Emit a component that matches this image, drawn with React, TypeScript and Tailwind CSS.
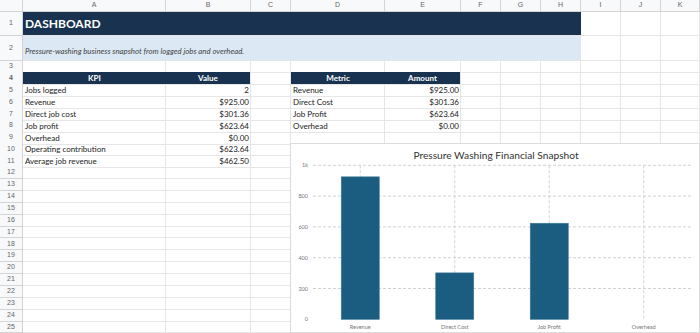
const GRID =
  "grid grid-cols-[23px_143px_85px_40px_94px_76px_40px_40px_40px_40px_40px_1fr]";

const letters = ["A", "B", "C", "D", "E", "F", "G", "H", "I", "J", "K"];

type DataRow = { n: number; kpi?: string; value?: string; metric?: string; amount?: string };

const dataRows: DataRow[] = [
  { n: 5, kpi: "Jobs logged", value: "2", metric: "Revenue", amount: "$925.00" },
  { n: 6, kpi: "Revenue", value: "$925.00", metric: "Direct Cost", amount: "$301.36" },
  { n: 7, kpi: "Direct job cost", value: "$301.36", metric: "Job Profit", amount: "$623.64" },
  { n: 8, kpi: "Job profit", value: "$623.64", metric: "Overhead", amount: "$0.00" },
  { n: 9, kpi: "Overhead", value: "$0.00" },
  { n: 10, kpi: "Operating contribution", value: "$623.64" },
  { n: 11, kpi: "Average job revenue", value: "$462.50" },
  ...Array.from({ length: 14 }, (_, i) => ({ n: 12 + i })),
];

const chartData = [
  { label: "Revenue", value: 925 },
  { label: "Direct Cost", value: 301.36 },
  { label: "Job Profit", value: 623.64 },
  { label: "Overhead", value: 0 },
];

const RowHead = ({ n }: { n: number }) => (
  <div className="flex items-center justify-center border-r border-b border-[#d4d4d4] bg-[#f8f9fa] font-['Liberation_Sans',sans-serif] text-[7px] text-[#666]">
    {n}
  </div>
);

const Empty = () => <div className="border-r border-b border-[#e6e6e6]" />;

const Chart = () => {
  // chart-local coordinates (chart box starts at x=290, y=143)
  const top = 21.3;
  const bottom = 175.3;
  const left = 22;
  const right = 400;
  const step = (right - left) / chartData.length;
  const y = (v: number) => bottom - (v / 1000) * (bottom - top);

  return (
    <div className="absolute left-[290px] top-[143px] h-[190px] w-[410px] border border-[#dcdcdc] bg-white">
      <svg width="410" height="190" className="font-['Lato',sans-serif]">
        <text x="205" y="15" textAnchor="middle" fontSize="10.2" fill="#333">
          Pressure Washing Financial Snapshot
        </text>
        {[1000, 800, 600, 400, 200].map((v) => (
          <line
            key={v}
            x1={left}
            x2={right}
            y1={y(v)}
            y2={y(v)}
            stroke="#d2d2d2"
            strokeWidth="1"
            strokeDasharray="3 2"
          />
        ))}
        {chartData.map((d, i) => (
          <line
            key={d.label}
            x1={left + step * (i + 0.5)}
            x2={left + step * (i + 0.5)}
            y1={top}
            y2={bottom}
            stroke="#d2d2d2"
            strokeWidth="1"
            strokeDasharray="3 2"
          />
        ))}
        {[0, 200, 400, 600, 800, 1000].map((v) => (
          <text key={v} x="17" y={y(v) + 2} textAnchor="end" fontSize="5.5" fill="#777">
            {v === 1000 ? "1k" : v}
          </text>
        ))}
        {chartData.map((d, i) =>
          d.value > 0 ? (
            <rect
              key={d.label}
              x={left + step * (i + 0.5) - 19}
              y={y(d.value)}
              width="38"
              height={bottom - y(d.value)}
              fill="#1a5d80"
              stroke="#3b7896"
              strokeWidth="0.6"
            />
          ) : null
        )}
        {chartData.map((d, i) => (
          <text
            key={d.label}
            x={left + step * (i + 0.5)}
            y="185"
            textAnchor="middle"
            fontSize="5.5"
            fill="#777"
          >
            {d.label}
          </text>
        ))}
      </svg>
    </div>
  );
};

export default function App() {
  return (
    <div className="relative h-[333px] w-[700px] overflow-hidden bg-white font-['Lato',sans-serif] text-[#222]">
      {/* column letters */}
      <div className={`${GRID} h-[12px] bg-[#f8f9fa]`}>
        {["", ...letters].map((l, i) => (
          <div
            key={i}
            className="flex items-center justify-center border-r border-b border-[#d4d4d4] font-['Liberation_Sans',sans-serif] text-[7px] text-[#666]"
          >
            {l}
          </div>
        ))}
      </div>

      {/* row 1 */}
      <div className={`${GRID} h-[24px]`}>
        <RowHead n={1} />
        <div className="col-span-8 flex items-center border-b border-[#e6e6e6] bg-[#183250] pl-[2px] text-[12px] font-bold text-white">
          DASHBOARD
        </div>
        <Empty />
        <Empty />
        <Empty />
      </div>

      {/* row 2 */}
      <div className={`${GRID} h-[25px]`}>
        <RowHead n={2} />
        <div className="col-span-8 flex items-end border-b border-[#e6e6e6] bg-[#dce9f5] pb-[2px] pl-[2px] text-[7.8px] italic text-[#444]">
          Pressure-washing business snapshot from logged jobs and overhead.
        </div>
        <Empty />
        <Empty />
        <Empty />
      </div>

      {/* row 3 */}
      <div className={`${GRID} h-[11px]`}>
        <RowHead n={3} />
        {Array.from({ length: 11 }, (_, i) => (
          <Empty key={i} />
        ))}
      </div>

      {/* row 4 */}
      <div className={`${GRID} h-[12px] text-[8px] font-bold text-white`}>
        <RowHead n={4} />
        <div className="flex items-center justify-center border-b border-[#e6e6e6] bg-[#183250]">KPI</div>
        <div className="flex items-center justify-center border-r border-b border-[#e6e6e6] bg-[#183250]">Value</div>
        <Empty />
        <div className="flex items-center justify-center border-b border-[#e6e6e6] bg-[#183250]">Metric</div>
        <div className="flex items-center justify-center border-r border-b border-[#e6e6e6] bg-[#183250]">Amount</div>
        {Array.from({ length: 6 }, (_, i) => (
          <Empty key={i} />
        ))}
      </div>

      {dataRows.map((r) => (
        <div key={r.n} className={`${GRID} h-[11.88px] text-[8px]`}>
          <RowHead n={r.n} />
          <div className="flex items-center border-r border-b border-[#e6e6e6] pl-[2px]">{r.kpi}</div>
          <div className="flex items-center justify-end border-r border-b border-[#e6e6e6] pr-[1px]">{r.value}</div>
          <Empty />
          <div className="flex items-center border-r border-b border-[#e6e6e6] pl-[2px]">{r.metric}</div>
          <div className="flex items-center justify-end border-r border-b border-[#e6e6e6] pr-[1px]">{r.amount}</div>
          {Array.from({ length: 6 }, (_, i) => (
            <Empty key={i} />
          ))}
        </div>
      ))}

      <Chart />
    </div>
  );
}
